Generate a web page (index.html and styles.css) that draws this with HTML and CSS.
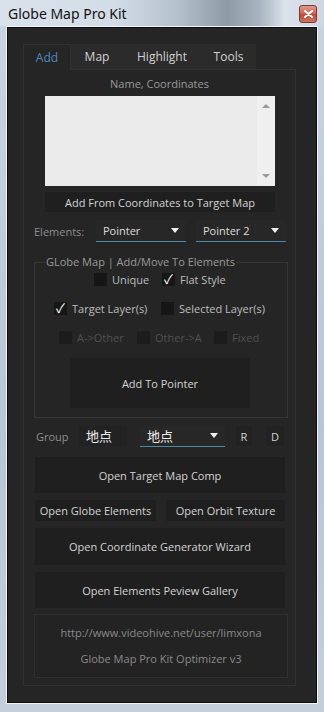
FILE: index.html
```html
<!DOCTYPE html>
<html lang="en">

<head>
    <meta charset="UTF-8">
    <meta name="viewport" content="width=device-width, initial-scale=1.0">
    <title>Globe Map Pro Kit</title>

    <link rel="stylesheet" href="styles.css">
</head>

<body>
    <div class="window">
        <div class="titlebar">
            <span class="title">Globe Map Pro Kit</span>
            <span class="close_btn">
                <svg width="9" height="8" viewBox="0 0 9 8">
                    <path d="M1 1 L8 7 M8 1 L1 7" stroke="#fff" stroke-width="2" stroke-linecap="round"></path>
                </svg>
            </span>
        </div>

        <div class="client">
            <div class="client_inner">
                <div class="tabs">
                    <span class="tab tab_add active">Add</span>
                    <span class="tab tab_map">Map</span>
                    <span class="tab tab_highlight">Highlight</span>
                    <span class="tab tab_tools">Tools</span>
                    <span class="tab_fill"></span>
                </div>

                <div class="panel">
                    <div class="caption">Name, Coordinates</div>

                    <div class="coords_box">
                        <div class="coords_text"></div>
                        <div class="scrollbar">
                            <span class="arrow_up"></span>
                            <span class="arrow_down"></span>
                        </div>
                    </div>

                    <div class="btn btn_add_coords">Add From Coordinates to Target Map</div>

                    <div class="elements_row">
                        <span class="label label_elements">Elements:</span>
                        <div class="dropdown dd_pointer">
                            <span>Pointer</span>
                            <span class="dd_arrow"></span>
                        </div>
                        <div class="dropdown dd_pointer2">
                            <span>Pointer 2</span>
                            <span class="dd_arrow"></span>
                        </div>
                    </div>

                    <fieldset class="group_box">
                        <legend>GLobe Map | Add/Move To Elements</legend>

                        <div class="cb_row row_1">
                            <label class="cb cb_unique"><span class="box"></span>Unique</label>
                            <label class="cb"><span class="box checked">&#10003;</span>Flat Style</label>
                        </div>
                        <div class="cb_row row_2">
                            <label class="cb cb_target"><span class="box checked">&#10003;</span>Target Layer(s)</label>
                            <label class="cb"><span class="box"></span>Selected Layer(s)</label>
                        </div>
                        <div class="cb_row row_3 disabled">
                            <label class="cb cb_aother"><span class="box"></span>A-&gt;Other</label>
                            <label class="cb cb_othera"><span class="box"></span>Other-&gt;A</label>
                            <label class="cb"><span class="box"></span>Fixed</label>
                        </div>

                        <div class="btn btn_pointer">Add To Pointer</div>
                    </fieldset>

                    <div class="group_row">
                        <span class="label label_group">Group</span>
                        <span class="group_input">地点</span>
                        <div class="dropdown dd_group">
                            <span>地点</span>
                            <span class="dd_arrow"></span>
                        </div>
                        <span class="small_btn btn_r">R</span>
                        <span class="small_btn btn_d">D</span>
                    </div>

                    <div class="btn btn_wide btn_comp">Open Target Map Comp</div>

                    <div class="half_row">
                        <div class="btn btn_globe">Open Globe Elements</div>
                        <div class="btn btn_orbit">Open Orbit Texture</div>
                    </div>

                    <div class="btn btn_wide btn_wizard">Open Coordinate Generator Wizard</div>
                    <div class="btn btn_wide btn_gallery">Open Elements Peview Gallery</div>

                    <div class="info">
                        <div>http://www.videohive.net/user/limxona</div>
                        <div>Globe Map Pro Kit Optimizer v3</div>
                    </div>
                </div>
            </div>
        </div>
    </div>
</body>

</html>
```

FILE: styles.css
```css
* {
    margin: 0;
    padding: 0;
    box-sizing: border-box;
}

body {
    width: 324px;
    height: 712px;
    overflow: hidden;
    font-family: "Open Sans", "Noto Sans CJK SC", sans-serif;
    font-size: 11px;
}

.window {
    width: 324px;
    height: 712px;
    background: linear-gradient(180deg, #c9d5e1 0%, #b7c6d5 60%, #c2cfdb 100%);
}

/* title bar */

.titlebar {
    height: 26px;
    display: flex;
    align-items: center;
    justify-content: space-between;
    padding: 0 7px 0 8px;
    background: linear-gradient(90deg, #d9e2eb 0%, #d3dde7 35%, #b4c0cb 55%, #8e9aa6 70%, #a7b3bf 80%, #dbe3eb 88%, #cdd7e1 100%);
}

.title {
    font-family: "Noto Sans", sans-serif;
    font-size: 14px;
    color: #111;
    line-height: 18px;
    margin-top: 2px;
}

.close_btn {
    width: 18px;
    height: 18px;
    display: flex;
    align-items: center;
    justify-content: center;
    border: 1px solid #7a3a32;
    border-radius: 3px;
    background: linear-gradient(180deg, #e0998a 0%, #cf6752 45%, #bb4a35 55%, #cc7560 100%);
    margin-top: 2px;
}

/* client area */

.client {
    margin-left: 6px;
    width: 312px;
    height: 678px;
    border: 1px solid #f2f5f8;
}

.client_inner {
    height: 100%;
    border: 1px solid #0e0e0e;
    background-color: #252525;
    padding: 16px 0 0 15px;
}

/* tabs */

.tabs {
    display: flex;
    width: 273px;
    height: 26px;
}

.tab {
    display: flex;
    align-items: center;
    justify-content: center;
    background-color: #2b2b2b;
    color: #d2d2d2;
    font-size: 12px;
    border-bottom: 1px solid #303030;
}

.tab.active {
    background-color: #252525;
    color: #4f8cbc;
    border: 1px solid #303030;
    border-bottom: none;
}

.tab_add {
    width: 48px;
}

.tab_map {
    width: 52px;
}

.tab_highlight {
    width: 78px;
}

.tab_tools {
    width: 55px;
}

.tab_fill {
    flex: 1;
    border-bottom: 1px solid #303030;
}

/* panel */

.panel {
    width: 273px;
    border: 1px solid #303030;
    border-top: none;
    display: flex;
    flex-direction: column;
    align-items: flex-start;
    padding-bottom: 7px;
}

.caption {
    width: 100%;
    text-align: center;
    color: #9a9a9a;
    line-height: 16px;
    margin-top: 6px;
}

.coords_box {
    margin: 4px 0 0 21px;
    width: 230px;
    height: 90px;
    background-color: #ebebeb;
    display: flex;
}

.coords_text {
    flex: 1;
}

.scrollbar {
    width: 18px;
    display: flex;
    flex-direction: column;
    justify-content: space-between;
    align-items: center;
    padding: 8px 0 8px;
    background-color: #efefef;
}

.arrow_up {
    border-left: 4px solid transparent;
    border-right: 4px solid transparent;
    border-bottom: 4px solid #9a9a9a;
}

.arrow_down {
    border-left: 4px solid transparent;
    border-right: 4px solid transparent;
    border-top: 4px solid #9a9a9a;
}

.btn {
    display: flex;
    align-items: center;
    justify-content: center;
    background-color: #1f1f1f;
    color: #d4d4d4;
}

.btn_add_coords {
    margin: 6px 0 0 21px;
    width: 230px;
    height: 20px;
}

/* elements */

.label {
    color: #8e8e8e;
}

.elements_row {
    margin: 8px 0 0 10px;
    width: 252px;
    height: 22px;
    display: flex;
    align-items: center;
}

.label_elements {
    width: 62px;
}

.dropdown {
    height: 22px;
    display: flex;
    align-items: center;
    justify-content: space-between;
    padding: 0 7px;
    color: #dedede;
    border-bottom: 1px solid #4a8aa8;
    background-color: #272727;
}

.dd_pointer {
    width: 90px;
}

.dd_pointer2 {
    width: 90px;
    margin-left: 10px;
}

.dd_arrow {
    border-left: 4px solid transparent;
    border-right: 4px solid transparent;
    border-top: 5px solid #f0f0f0;
}

/* group box */

.group_box {
    margin: 13px 0 0 10px;
    width: 254px;
    height: 163px;
    border: 1px solid #363636;
    padding: 0;
}

.group_box legend {
    margin-left: 10px;
    padding: 0 1px;
    color: #9a9a9a;
    line-height: 14px;
}

.cb_row {
    display: flex;
    height: 16px;
    align-items: center;
    color: #bdbdbd;
}

.cb {
    display: flex;
    align-items: center;
    gap: 5px;
}

.box {
    width: 13px;
    height: 13px;
    background-color: #161616;
    color: #fff;
    font-size: 13px;
    line-height: 13px;
    display: flex;
    align-items: center;
    justify-content: center;
}

.row_1 {
    margin: 2px 0 0 59px;
}

.cb_unique {
    width: 68px;
}

.row_2 {
    margin: 13px 0 0 19px;
}

.cb_target {
    width: 107px;
}

.row_3 {
    margin: 13px 0 0 24px;
}

.disabled {
    color: #505050;
}

.disabled .box {
    background-color: #1c1c1c;
}

.cb_aother {
    width: 78px;
}

.cb_othera {
    width: 77px;
}

.btn_pointer {
    margin: 13px 0 0 35px;
    width: 180px;
    height: 50px;
}

/* group row */

.group_row {
    margin: 8px 0 0 12px;
    height: 20px;
    display: flex;
    align-items: center;
}

.label_group {
    width: 43px;
}

.group_input {
    width: 48px;
    height: 20px;
    padding-left: 7px;
    line-height: 20px;
    background-color: #222;
    color: #eee;
    font-size: 13px;
}

.dd_group {
    width: 85px;
    height: 21px;
    margin-left: 13px;
    font-size: 13px;
    color: #eee;
}

.small_btn {
    height: 20px;
    display: flex;
    align-items: center;
    justify-content: center;
    background-color: #222;
    color: #d4d4d4;
}

.btn_r {
    width: 16px;
    margin-left: 11px;
}

.btn_d {
    width: 18px;
    margin-left: 14px;
}

/* buttons */

.btn_wide {
    margin: 7px 0 0 11px;
    width: 250px;
    height: 36px;
}

.btn_comp {
    margin-top: 11px;
}

.half_row {
    margin: 7px 0 0 11px;
    width: 250px;
    height: 21px;
    display: flex;
    gap: 10px;
}

.btn_globe {
    width: 121px;
}

.btn_orbit {
    width: 119px;
}

.btn_wizard {
    height: 37px;
}

/* info */

.info {
    margin: 6px 0 0 10px;
    width: 254px;
    height: 64px;
    border: 1px solid #2f2f2f;
    background-color: #232323;
    color: #8a8a8a;
    display: flex;
    flex-direction: column;
    align-items: center;
    gap: 10px;
    padding-top: 10px;
    line-height: 16px;
}
```
